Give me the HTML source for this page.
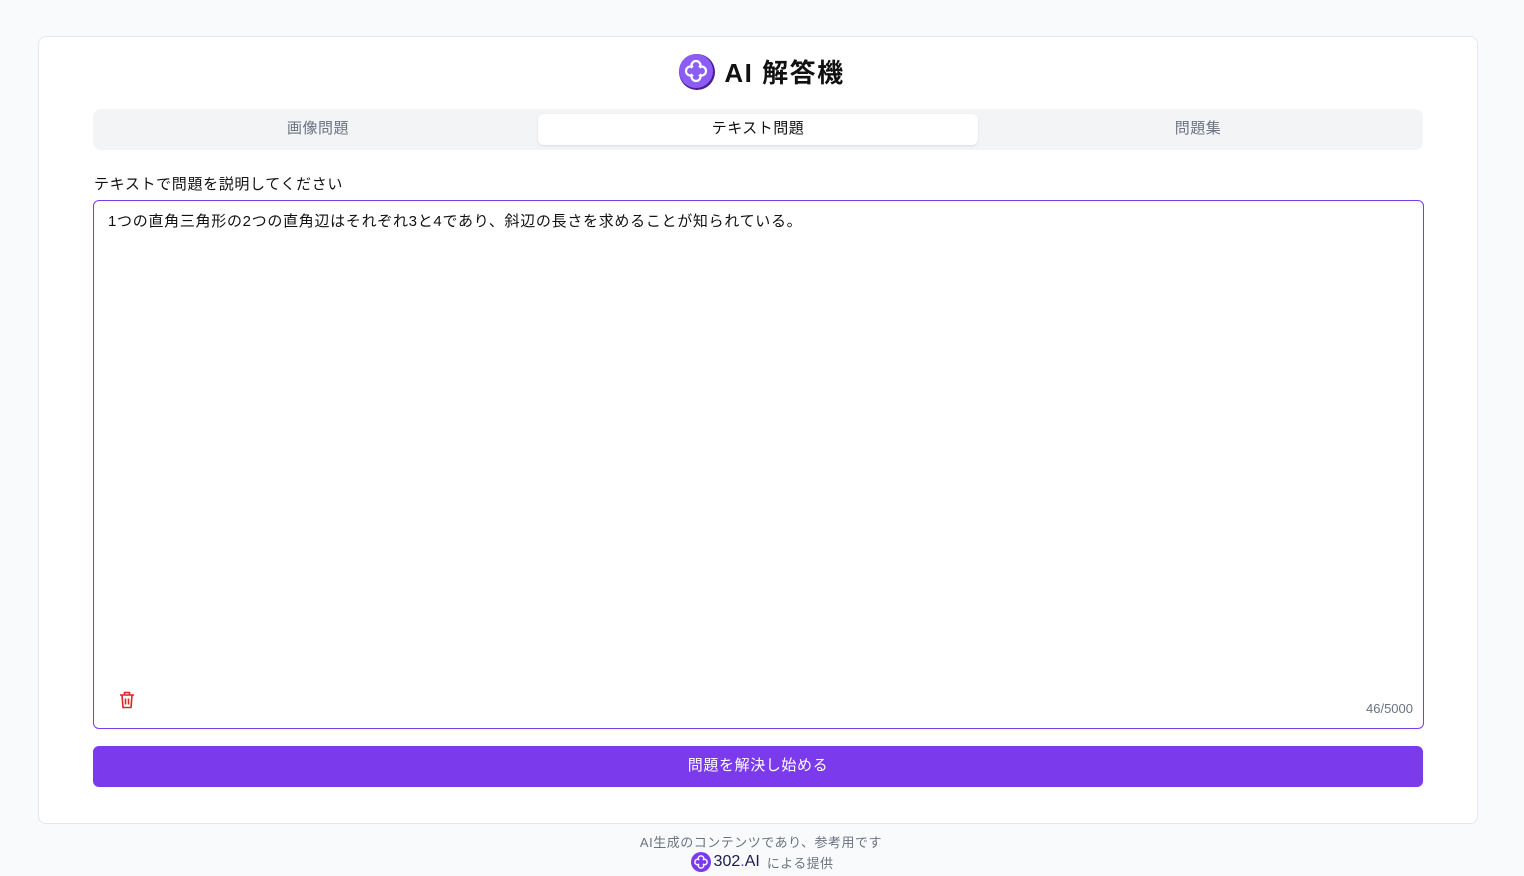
<!DOCTYPE html>
<html><head><meta charset="utf-8"><style>
*{box-sizing:border-box;margin:0;padding:0}
body{width:1524px;height:876px;background:#f9fafb;font-family:"Liberation Sans","Noto Sans CJK JP",sans-serif;position:relative;overflow:hidden}
.card{position:absolute;left:38px;top:36px;width:1440px;height:788px;background:#fff;border:1px solid #e5e7eb;border-radius:8px}
.title{position:absolute;left:0;right:0;top:53px;display:flex;justify-content:center;align-items:center;gap:9px;font-size:26px;font-weight:bold;color:#111;letter-spacing:1.5px}
.tabs{position:absolute;left:93px;top:109px;width:1330px;height:41px;background:#f3f4f6;border-radius:8px}
.tab{position:absolute;top:5px;height:31px;width:440px;text-align:center;line-height:29px;font-size:15px;color:#6b7280;letter-spacing:0.5px}
.tab.act{background:#fff;color:#111;border-radius:6px;box-shadow:0 1px 2px rgba(0,0,0,.1)}
.lbl{position:absolute;left:94px;top:173px;font-size:15px;color:#111;letter-spacing:0.65px}
.ta{position:absolute;left:93px;top:200px;width:1331px;height:529px;border:1px solid #7c3aed;border-radius:6px;background:#fff}
.ta .t{position:absolute;left:14px;top:9px;font-size:15px;color:#111;letter-spacing:0.7px}
.cnt{position:absolute;right:10px;bottom:12px;font-size:13px;color:#6b7280}
.btn{position:absolute;left:93px;top:746px;width:1330px;height:41px;background:#7c3aed;border-radius:6px;color:#fff;font-size:15px;text-align:center;line-height:39px;letter-spacing:0.6px}
.f1{position:absolute;left:0;right:0;top:832px;text-align:center;font-size:13px;color:#6b7280;letter-spacing:0.5px;padding-right:2px}
.f2{position:absolute;left:0;right:0;top:852px;display:flex;justify-content:center;align-items:center;gap:3px;font-size:13px;color:#6b7280}
</style></head><body>
<div class="card"></div>
<div class="title"><svg width="36" height="36" viewBox="0 0 36 36"><circle cx="18" cy="18" r="18" fill="#4c1d95"/><circle cx="17" cy="17" r="17" fill="#8b5cf6"/><g fill="none" stroke="#fff" stroke-width="2.2"><circle cx="17" cy="11.5" r="4.5"/><circle cx="17" cy="22.5" r="4.5"/><circle cx="11.5" cy="17" r="4.5"/><circle cx="22.5" cy="17" r="4.5"/></g><circle cx="17" cy="17" r="5" fill="#8b5cf6"/></svg><span>AI 解答機</span></div>
<div class="tabs"><div class="tab" style="left:5px">画像問題</div><div class="tab act" style="left:445px">テキスト問題</div><div class="tab" style="left:885px">問題集</div></div>
<div class="lbl">テキストで問題を説明してください</div>
<div class="ta"><div class="t">1つの直角三角形の2つの直角辺はそれぞれ3と4であり、斜辺の長さを求めることが知られている。</div>
<svg style="position:absolute;left:25px;top:490px" width="16" height="18" viewBox="0 0 16 18" fill="none" stroke="#dc2626" stroke-width="1.6"><path d="M1 4h14M5.5 4V1.5h5V4M3 4l1 12.5h8L13 4M6.5 7.5v6M9.5 7.5v6"/></svg>
<div class="cnt">46/5000</div></div>
<div class="btn">問題を解決し始める</div>
<div class="f1">AI生成のコンテンツであり、参考用です</div>
<div class="f2"><svg width="20" height="20" viewBox="0 0 36 36"><circle cx="18" cy="18" r="18" fill="#7c3aed"/><g fill="none" stroke="#fff" stroke-width="2.6"><circle cx="18" cy="12" r="5"/><circle cx="18" cy="24" r="5"/><circle cx="12" cy="18" r="5"/><circle cx="24" cy="18" r="5"/></g><circle cx="18" cy="18" r="5.5" fill="#7c3aed"/></svg><span style="font-size:16px;color:#1e1b4b;font-weight:500">302<span style="color:#7c3aed">.</span>AI</span><span style="letter-spacing:0.4px">&nbsp;による提供</span></div>
</body></html>
